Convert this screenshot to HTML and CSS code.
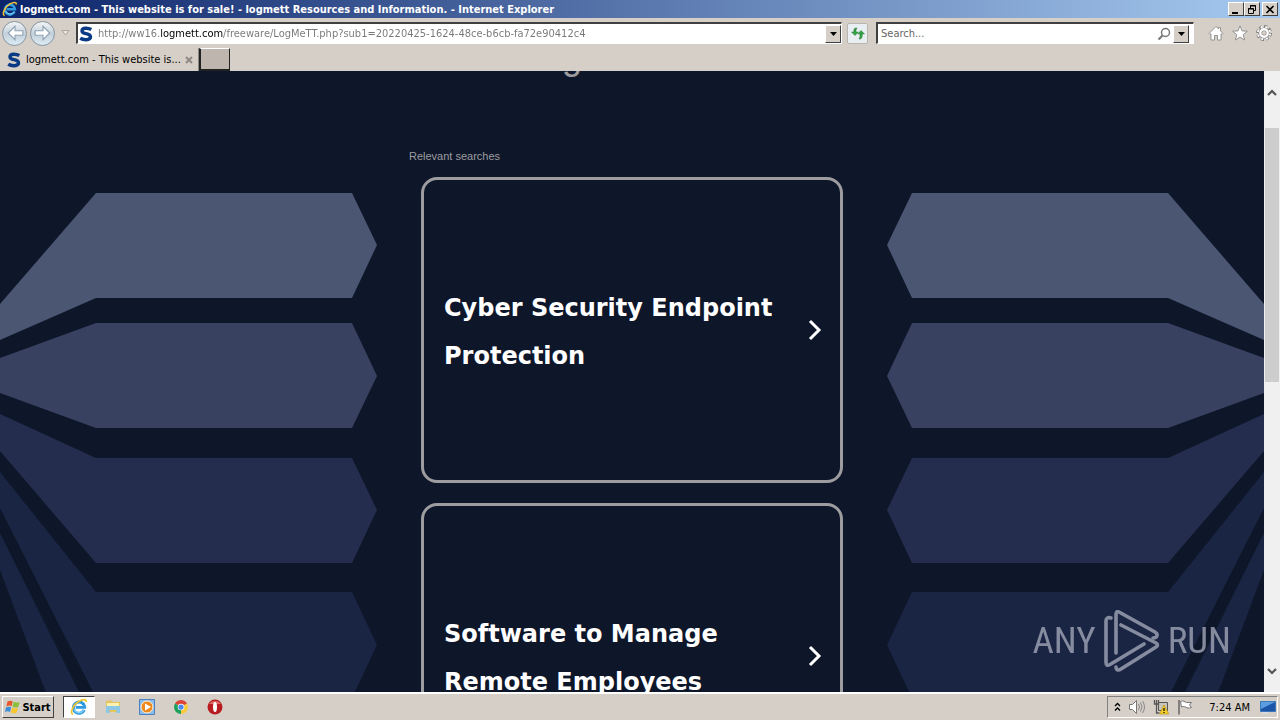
FILE: index.html
```
<!DOCTYPE html>
<html lang="en">
<head>
  <meta charset="utf-8">
  <title>logmett.com - This website is for sale!</title>
  <link rel="stylesheet" href="styles.css">
</head>
<body>
  <!-- shared icons -->
  <svg class="symbols" width="0" height="0" aria-hidden="true">
    <symbol id="ie" viewBox="0 0 16 16">
      <path d="M12.6 10.6A5 5 0 1 1 13 8.3H5" fill="none" stroke="#2f9be0" stroke-width="2.6"/>
      <path d="M12.2 10.8A4.9 4.9 0 0 1 3.6 10" fill="none" stroke="#8fd4f8" stroke-width="1"/>
      <path d="M2.6 14.6C-.6 13 3.2 5.500 8 2.900c3.600-2 6.500-2.200 6.400.6" fill="none" stroke="#f2c530" stroke-width="1.500"/>
    </symbol>
    <symbol id="site" viewBox="0 0 16 16">
      <path d="M13.300 3.600C10.500 2 4 1.300 4 4.900c0 3.800 8.500 1.800 8.500 5.900 0 4-7.500 3.200-10.300 1.500" fill="none" stroke="#0b3a85" stroke-width="3.400"/>
    </symbol>
    <symbol id="drop" viewBox="0 0 7 4"><path d="M0 0h7L3.500 4z"/></symbol>
    <symbol id="next" viewBox="0 0 14 22"><path d="M2 2l9 9-9 9" fill="none" stroke="#fff" stroke-width="3"/></symbol>
  </svg>

  <header class="titlebar">
    <svg class="icon"><use href="#ie"/></svg>
    <span class="titlebar-text">logmett.com - This website is for sale! - logmett Resources and Information. - Internet Explorer</span>
    <div class="window-buttons">
      <button class="bevel" aria-label="Minimize"><svg width="10" height="9"><path d="M1 7h6v2H1z"/></svg></button>
      <button class="bevel" aria-label="Restore"><svg width="10" height="9"><path d="M3.500 3V.500h5v5H7M3 1h6M1.500 3.500h5v5h-5zM1 4h6" fill="none" stroke="#000"/></svg></button>
      <button class="bevel" aria-label="Close"><svg width="10" height="9"><path d="M1.500 1l7 7M8.500 1l-7 7" stroke="#000" stroke-width="1.600"/></svg></button>
    </div>
  </header>

  <nav class="toolbar">
    <div class="history">
      <button class="round" aria-label="Back"><svg width="18" height="16" viewBox="0 0 16 14"><path d="M8 1L2 7l6 6v-4h7V5H8z" fill="#fff" stroke="#8fa3b5"/></svg></button>
      <button class="round" aria-label="Forward"><svg width="18" height="16" viewBox="0 0 16 14"><path d="M8 1l6 6-6 6V9H1V5h7z" fill="#fff" stroke="#8fa3b5"/></svg></button>
      <button class="recent" aria-label="Recent pages"><svg width="9" height="6"><path d="M1 .500h7L4.500 5z" fill="#e8e4dc" stroke="#aaa69f"/></svg></button>
    </div>
    <div class="field address">
      <svg class="icon"><use href="#site"/></svg>
      <input class="url" type="text" aria-label="Address" value="http://ww16.logmett.com/freeware/LogMeTT.php?sub1=20220425-1624-48ce-b6cb-fa72e90412c4">
      <button class="bevel drop" aria-label="Show addresses"><svg width="7" height="4"><use href="#drop"/></svg></button>
    </div>
    <button class="refresh" aria-label="Refresh">
      <svg width="16" height="16" viewBox="0 0 16 16"><path d="M7 3C4.500 2.500 3.600 4 3.800 7H1.500L5 10.500 8.300 7H6c-.1-1.800 0-2.500 1-4z" fill="#35a045" stroke="#207a30" stroke-width=".5"/><path d="M9 14c2.500.5 3.400-1.500 3.200-5h2.300L11 5.500 7.700 9H10c.1 2 0 3.500-1 5z" fill="#35a045" stroke="#207a30" stroke-width=".5"/></svg>
    </button>
    <div class="field search">
      <input type="text" aria-label="Search" placeholder="Search...">
      <button class="find" aria-label="Go"><svg width="14" height="14"><circle cx="8.500" cy="5.500" r="4" fill="none" stroke="#777" stroke-width="1.500"/><path d="M5.500 8.500L1.500 12.500" stroke="#777" stroke-width="2.200"/></svg></button>
      <button class="bevel drop" aria-label="Search providers"><svg width="7" height="4"><use href="#drop"/></svg></button>
    </div>
    <div class="tools">
      <button aria-label="Home"><svg width="16" height="16" viewBox="0 0 16 16"><path d="M1 8.500L8 1.500l2.500 2.400V2.500h2v3.400L15 8.500l-1 1-1-.8V15H9.500v-4.500h-3V15H3V8.700l-1 .8z" fill="#fff" stroke="#8c8c8c" stroke-width=".9"/></svg></button>
      <button aria-label="Favorites"><svg width="16" height="16" viewBox="0 0 16 16"><path d="M8 .8l2 5.100 5.400.300-4.200 3.500 1.400 5.300L8 12l-4.600 3 1.400-5.300L.6 6.200 6 5.900z" fill="#fff" stroke="#8c8c8c" stroke-width=".9"/></svg></button>
      <button aria-label="Tools"><svg width="16" height="16" viewBox="0 0 16 16"><circle cx="8" cy="8" r="6.600" fill="none" stroke="#7c7c7c" stroke-width="2.600" stroke-dasharray="3.200 1.980"/><circle cx="8" cy="8" r="5.600" fill="#7c7c7c"/><circle cx="8" cy="8" r="6.200" fill="none" stroke="#fff" stroke-width="1.900" stroke-dasharray="1.900 2.970" stroke-dashoffset="-.6"/><circle cx="8" cy="8" r="3.700" fill="none" stroke="#fff" stroke-width="2.400"/><circle cx="8" cy="8" r="2" fill="#d5cfc7"/></svg></button>
    </div>
  </nav>

  <div class="tabs">
    <div class="tab">
      <svg class="icon"><use href="#site"/></svg>
      <span class="tab-title">logmett.com - This website is...</span>
      <button class="tab-close" aria-label="Close tab"><svg width="8" height="8"><path d="M1 1l6 6M7 1L1 7" stroke="#8c8883" stroke-width="2"/></svg></button>
    </div>
    <button class="new-tab" aria-label="New tab"></button>
  </div>

  <div class="viewport">
    <main class="page">
      <svg class="wing" viewBox="0 71 377 621" aria-hidden="true">
        <g id="wing">
          <path fill="#4b5673" d="M0 304L96 193H352L377 245 352 298H96L0 340z"/>
          <path fill="#384160" d="M0 358L96 323H352L377 376 352 428H96L0 393z"/>
          <path fill="#242d4d" d="M0 414L96 458H352L377 510 352 563H96L0 451z"/>
          <path fill="#1a2443" d="M0 472L96 592H352L377 645 352 698H96L0 508z"/>
          <path fill="#1a2443" d="M0 533L82 698H48L0 570z"/>
        </g>
      </svg>
      <div class="results">
        <h1>logmett.com</h1>
        <p class="results-label">Relevant searches</p>
        <a class="card" href="#endpoint"><span>Cyber Security Endpoint Protection</span><svg width="14" height="22"><use href="#next"/></svg></a>
        <a class="card" href="#remote"><span>Software to Manage Remote Employees</span><svg width="14" height="22"><use href="#next"/></svg></a>
      </div>
      <svg class="wing" viewBox="0 71 377 621" aria-hidden="true"><use href="#wing" transform="matrix(-1 0 0 1 377 0)"/></svg>

      <div class="watermark">
        <span>ANY</span>
        <svg width="56" height="62" viewBox="0 0 56 62" fill="none" stroke="#a2a6b8" stroke-width="3.600" stroke-linejoin="round" stroke-linecap="round">
          <path d="M7 8C4 7 2 8 2 11v41c0 3 1 4 4 2.500L40 34"/>
          <path d="M12 43V5c0-3 1-4 3-3l36 20c3 2 3 6-2 6"/>
          <path d="M17 15l35 18c2 1 2 3 0 4L17 59c-3 2-5 1-5-2"/>
        </svg>
        <span>RUN</span>
      </div>
    </main>
    <div class="scrollbar">
      <button aria-label="Scroll up"><svg width="10" height="8"><path d="M1 6l4-4 4 4" fill="none" stroke="#555" stroke-width="2.200"/></svg></button>
      <div class="track"><div class="thumb"></div></div>
      <button aria-label="Scroll down"><svg width="10" height="8"><path d="M1 2l4 4 4-4" fill="none" stroke="#555" stroke-width="2.200"/></svg></button>
    </div>
  </div>

  <footer class="taskbar">
    <button class="start">
      <svg width="16" height="16" viewBox="0 0 16 16"><path d="M2.500 2.500c2-1.200 3.500-1 5.200-.2L6.500 7.200c-1.800-.9-3.500-.7-5.200.2z" fill="#e8562a"/><path d="M8.600 2.800c2 1 3.700 1 6 .1l-1.300 5c-2.100.9-4 .9-5.900-.1z" fill="#8cc03c"/><path d="M1 8.400c1.800-.9 3.500-1 5.200-.1L5 13c-1.700-.9-3.300-.8-5 .1z" fill="#3c8ed8"/><path d="M7.100 8.700c2 1 3.800 1 5.900.1l-1.300 4.900c-2 .9-3.900.9-5.900-.1z" fill="#f7c62c"/></svg>
      Start
    </button>
    <div class="launchers">
      <button class="active" aria-label="Internet Explorer"><svg width="18" height="18"><use href="#ie"/></svg></button>
      <button aria-label="Explorer"><svg width="16" height="16" viewBox="0 0 16 16"><path d="M1 3l1-1.500h4l1 1.500h8v10H1z" fill="#e5c45a"/><path d="M2 4h12v6H2z" fill="#faf0b0"/><path d="M1 7h14v7h-3.500v-3h-7v3H1z" fill="#8cc8e6"/></svg></button>
      <button aria-label="Media Player"><svg width="16" height="16" viewBox="0 0 16 16"><path d="M.5.500h15v15H.5z" fill="#8cbce8" stroke="#4a80c0"/><circle cx="8" cy="8" r="6" fill="#ee8a1d" stroke="#fff3dc"/><path d="M6 4.500l6 3.500-6 3.500z" fill="#fff"/></svg></button>
      <button aria-label="Chrome"><svg width="14" height="14" viewBox="0 0 16 16"><path d="M8 8L1.100 4A8 8 0 0 1 14.900 4z" fill="#dc4437"/><path d="M8 8L14.900 4A8 8 0 0 1 8 16z" fill="#f8cb3c"/><path d="M8 8v8A8 8 0 0 1 1.100 4z" fill="#1ca05c"/><circle cx="8" cy="8" r="3.800" fill="#fff"/><circle cx="8" cy="8" r="3" fill="#4a8af0"/></svg></button>
      <button aria-label="Opera"><svg width="16" height="16" viewBox="0 0 16 16"><circle cx="8" cy="8" r="7.500" fill="#b81c20"/><path d="M2 5a7 6 0 0 1 12 0z" fill="#e06a66"/><ellipse cx="8" cy="8" rx="2" ry="5" fill="#fff"/></svg></button>
    </div>
    <div class="tray">
      <svg width="7" height="10"><path d="M1 4l2.500-2.500L6 4M1 8.500L3.500 6 6 8.500" fill="none" stroke="#000" stroke-width="1.300"/></svg>
      <svg width="16" height="16" viewBox="0 0 16 16"><path d="M.5 5.500h3l4-4v13l-4-4h-3z" fill="#fff" stroke="#777"/><path d="M9.500 5q2 3 0 6M11.500 3.500q3 4.500 0 9M13.500 2q4 6 0 12" fill="none" stroke="#888"/></svg>
      <svg width="16" height="16" viewBox="0 0 16 16"><path d="M5.500 3.500h9v8h-9z" fill="#c8c4bc" stroke="#555"/><path d="M1.500 1v4h4V1M3.500 1v13h3" fill="none" stroke="#555" stroke-width="1.300"/><path d="M11 6l4.700 9H6.500z" fill="#f6d22c" stroke="#c09010" stroke-width=".7"/><path d="M11 9v3M11 13v1" stroke="#000" stroke-width="1.200"/></svg>
      <svg width="16" height="16" viewBox="0 0 16 16"><path d="M3.500 2.500c3-1.500 4 .5 6 1h5l-2 2.500 2 2.500c-3 1-4 .5-6-.5-2-.7-3-.5-4 0z" fill="#fff" stroke="#777"/><path d="M2 1v14.500" stroke="#666" stroke-width="1.500"/></svg>
      <time>7:24 AM</time>
      <svg width="16" height="14" viewBox="0 0 16 14"><path d="M.5 1.500h15v10H.5z" fill="#1c55a8" stroke="#3d78bc"/><path d="M1 9V2h14z" fill="#5c9ce0"/><path d="M2 13h6" stroke="#dce8f4"/></svg>
    </div>
  </footer>
</body>
</html>
```
FILE: styles.css
```
:root {
  --face: #d5cfc7;
  --shadow: #404040;
  --page-bg: #0e162a;
  --card-border: #9d9d9f;
  --ui-font: "DejaVu Sans Condensed", "DejaVu Sans", sans-serif;
}

* {
  box-sizing: border-box;
}

body {
  display: flex;
  flex-direction: column;
  height: 100vh;
  margin: 0;
  overflow: hidden;
  background: var(--face);
  font-family: var(--ui-font);
  font-size: 11px;
  color: #000;
}

svg {
  display: block;
  flex: none;
}

button {
  display: flex;
  align-items: center;
  justify-content: center;
  flex: none;
  margin: 0;
  padding: 0;
  border: 0;
  background: none;
  font: inherit;
}

.symbols {
  position: absolute;
}

.icon {
  width: 16px;
  height: 16px;
}

/* Raised Windows classic button */
.bevel {
  background: var(--face);
  border: 1px solid;
  border-color: #fff var(--shadow) var(--shadow) #fff;
}

/* Title bar */
.titlebar {
  display: flex;
  align-items: center;
  gap: 2px;
  flex: none;
  height: 18px;
  padding: 0 2px;
  background: linear-gradient(to right, #0c246a, #a6caf0);
  color: #fff;
  font-weight: bold;
}
.titlebar-text {
  flex: 1;
  white-space: nowrap;
}
.window-buttons {
  display: flex;
}
.window-buttons button {
  width: 16px;
  height: 14px;
}
.window-buttons button:last-child {
  margin-left: 2px;
}

/* Address row */
.toolbar {
  display: flex;
  align-items: center;
  flex: none;
  height: 30px;
  padding: 0 8px 0 2px;
}
.history {
  display: flex;
  align-items: center;
  gap: 3px;
  width: 74px;
}
.round {
  width: 25px;
  height: 25px;
  border: 1px solid #8796a3;
  border-radius: 50%;
  background: linear-gradient(#f4f6f8, #c3d0da 50%, #dcebf4);
}
.recent {
  width: 14px;
}
.field {
  display: flex;
  align-items: center;
  height: 22px;
  border: 1px solid;
  border-color: var(--shadow) #fff #fff var(--shadow);
  border-width: 2px 1px 1px 2px;
  background: #fff;
}
.field input {
  flex: 1;
  min-width: 0;
  height: 18px;
  padding: 0 3px;
  border: 0;
  outline: 0;
  background: none;
  font: inherit;
}
.address {
  flex: 1;
}
/* the domain is black, the rest of the address is grey */
.field .url {
  padding-left: 4px;
  background: linear-gradient(to right, #777 66px, #000 66px, #000 129px, #777 129px) text;
  color: transparent;
}
.field ::placeholder {
  color: #666;
  opacity: 1;
}
.drop {
  width: 16px;
  height: 18px;
}
.refresh {
  width: 21px;
  height: 21px;
  margin: 0 8px 0 5px;
  border: 1px solid #b8b5b0;
  border-radius: 2px;
  background: #e9eef2;
}
.search {
  width: 318px;
  padding-right: 4px;
}
.find {
  width: 18px;
}
.tools {
  display: flex;
  gap: 8px;
  margin-left: 14px;
}

/* Tabs */
.tabs {
  display: flex;
  flex: none;
  height: 23px;
}
.tab {
  display: flex;
  align-items: center;
  gap: 4px;
  width: 199px;
  padding: 0 6px;
  border-right: 1px solid #8b8781;
}
.tab-title {
  flex: 1;
  white-space: nowrap;
}
.new-tab {
  width: 31px;
  border: 1px solid #222;
  border-width: 1px 1px 2px 2px;
  border-top-color: #fff;
  background: #bdb5ae;
}

/* Web page */
.viewport {
  display: flex;
  flex: 1;
  min-height: 0;
}
.page {
  position: relative;
  display: flex;
  flex: 1;
  align-items: flex-start;
  justify-content: space-between;
  overflow: hidden;
  background: var(--page-bg);
}
.wing {
  width: 377px;
}
.results {
  width: 446px;
  margin-top: -35px;
  font-family: "Liberation Sans", Arial, sans-serif;
  color: var(--card-border);
}
.results h1 {
  margin: 0;
  font-size: 36px;
  font-weight: normal;
  line-height: 42px;
  text-align: center;
}
.results-label {
  margin: 72px 0 15px;
  font-size: 11px;
  line-height: 12px;
}
.card {
  display: flex;
  align-items: center;
  justify-content: space-between;
  min-height: 306px;
  margin: 0 12px 20px;
  padding: 20px 18px 20px 20px;
  border: 3px solid var(--card-border);
  border-radius: 16px;
  color: #fff;
  font: bold 24px/48px "DejaVu Sans", Verdana, sans-serif;
  text-decoration: none;
}
.card span {
  max-width: 340px;
  padding-top: 4px;
}

.watermark {
  position: absolute;
  right: 33px;
  bottom: 20px;
  display: flex;
  align-items: center;
  gap: 8px;
  color: #a2a6b8;
  font: 37px/40px "Roboto Condensed", "Liberation Sans", sans-serif;
  opacity: .8;
}

/* Page scrollbar */
.scrollbar {
  display: flex;
  flex-direction: column;
  width: 16px;
  padding: 14px 0 13px;
  background: #f0f0f0;
}
.scrollbar button {
  width: 16px;
  height: 16px;
}
.track {
  flex: 1;
  padding: 27px 0 0 1px;
}
.thumb {
  width: 14px;
  height: 254px;
  background: #cdcdcd;
}

/* Taskbar */
.taskbar {
  display: flex;
  align-items: center;
  flex: none;
  height: 28px;
  padding: 0 2px;
  border-top: 2px solid #fff;
}
.start {
  gap: 1px;
  width: 52px;
  height: 22px;
  border: 1px solid;
  border-color: #fff var(--shadow) var(--shadow) #fff;
  font-weight: bold;
}
.launchers {
  display: flex;
  flex: 1;
  gap: 2px;
  margin-left: 9px;
}
.launchers button {
  width: 32px;
  height: 22px;
}
.launchers .active {
  border: 1px solid;
  border-color: var(--shadow) #fff #fff var(--shadow);
  background: #fff;
}
.tray {
  display: flex;
  align-items: center;
  gap: 8px;
  height: 22px;
  padding: 0 1px 0 6px;
  border: 1px solid;
  border-color: #808080 #fff #fff #808080;
}
.tray time {
  margin: 0 2px 0 8px;
}
```
